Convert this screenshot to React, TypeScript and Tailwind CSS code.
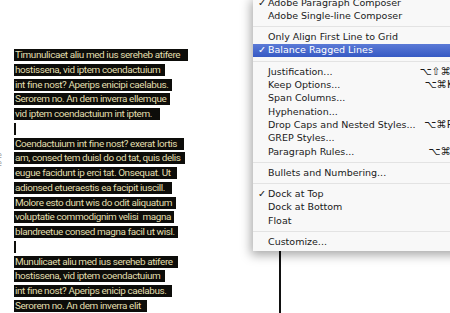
import React from "react";

const lines: { t: string; w: number }[] = [
  { t: "Timunulicaet aliu med ius sereheb atifere", w: 174 },
  { t: "hostissena, vid iptem coendactuium", w: 151 },
  { t: "int fine nost? Aperips enicipi caelabus.", w: 158 },
  { t: "Serorem no. An dem inverra ellemque", w: 156 },
  { t: "vid iptem coendactuium int iptem.", w: 146 },
  { t: "", w: 2 },
  { t: "Coendactuium int fine nost? exerat lortis", w: 170 },
  { t: "am, consed tem duisl do od tat, quis delis", w: 171 },
  { t: "eugue facidunt ip erci tat. Onsequat. Ut", w: 163 },
  { t: "adionsed etueraestis ea facipit iuscill.", w: 158 },
  { t: "Molore esto dunt wis do odit aliquatum", w: 162 },
  { t: "voluptatie commodignim velisi  magna", w: 160 },
  { t: "blandreetue consed magna facil ut wisl.", w: 164 },
  { t: "", w: 2 },
  { t: "Munulicaet aliu med ius sereheb atifere", w: 164 },
  { t: "hostissena, vid iptem coendactuium", w: 151 },
  { t: "int fine nost? Aperips enicip caelabus.", w: 158 },
  { t: "Serorem no. An dem inverra elit", w: 133 },
];

type Item =
  | { kind: "sep" }
  | { kind: "item"; label: string; check?: boolean; active?: boolean; sc?: string };

const items: Item[] = [
  { kind: "item", label: "Adobe Paragraph Composer", check: true },
  { kind: "item", label: "Adobe Single-line Composer" },
  { kind: "sep" },
  { kind: "item", label: "Only Align First Line to Grid" },
  { kind: "item", label: "Balance Ragged Lines", check: true, active: true },
  { kind: "sep" },
  { kind: "item", label: "Justification...", sc: "⌥⇧⌘J" },
  { kind: "item", label: "Keep Options...", sc: "⌥⌘K" },
  { kind: "item", label: "Span Columns..." },
  { kind: "item", label: "Hyphenation..." },
  { kind: "item", label: "Drop Caps and Nested Styles...", sc: "⌥⌘R" },
  { kind: "item", label: "GREP Styles..." },
  { kind: "item", label: "Paragraph Rules...", sc: "⌥⌘J" },
  { kind: "sep" },
  { kind: "item", label: "Bullets and Numbering..." },
  { kind: "sep" },
  { kind: "item", label: "Dock at Top", check: true },
  { kind: "item", label: "Dock at Bottom" },
  { kind: "item", label: "Float" },
  { kind: "sep" },
  { kind: "item", label: "Customize..." },
];

export default function App() {
  return (
    <div className="relative w-[450px] h-[313px] overflow-hidden bg-white">
      <div className="flex h-full">
        <div className="relative w-[279px] shrink-0 pl-[14px] pt-[49px]">
          <div className="absolute left-[-3px] top-[152px] flex flex-col text-[8px] leading-[8px] text-[#9a9a9a] font-['DejaVu_Sans',sans-serif]">
            <span>e</span>
            <span>e</span>
          </div>
          <div className="flex flex-col gap-[2.75px] font-['Roboto',sans-serif] text-[9.95px] tracking-[-0.4px] text-[#e2dfae]">
            {lines.map((l, i) => (
              <div
                key={i}
                style={{ width: l.w }}
                className="h-[12px] bg-[#0d0d0a] leading-[12px] pl-[1px] whitespace-pre overflow-hidden"
              >
                {l.t}
              </div>
            ))}
          </div>
        </div>
        <div className="w-[2px] bg-[#111] self-stretch" />
      </div>

      <div className="absolute left-[253px] top-[-4px] w-[213px] bg-[#f8f8f8] shadow-[-2px_4px_10px_rgba(0,0,0,0.35)] pb-[2px] font-['DejaVu_Sans',sans-serif] text-[9.5px] text-[#1a1a1a]">
        {items.map((it, i) =>
          it.kind === "sep" ? (
            <div key={i} className="h-[8px] flex items-center">
              <div className="h-px w-full bg-[#e3e3e3]" />
            </div>
          ) : (
            <div
              key={i}
              className={
                "h-[13.3px] flex items-center pr-[12px] " +
                (it.active ? "bg-gradient-to-b from-[#5b7ad6] to-[#3659c4] text-white" : "")
              }
            >
              <span className="w-[15px] pl-[5px] shrink-0 text-[9.5px]">{it.check ? "✓" : ""}</span>
              <span className="flex-1 whitespace-nowrap">{it.label}</span>
              {it.sc && <span className="whitespace-nowrap text-[10.5px]">{it.sc}</span>}
            </div>
          )
        )}
      </div>
    </div>
  );
}
